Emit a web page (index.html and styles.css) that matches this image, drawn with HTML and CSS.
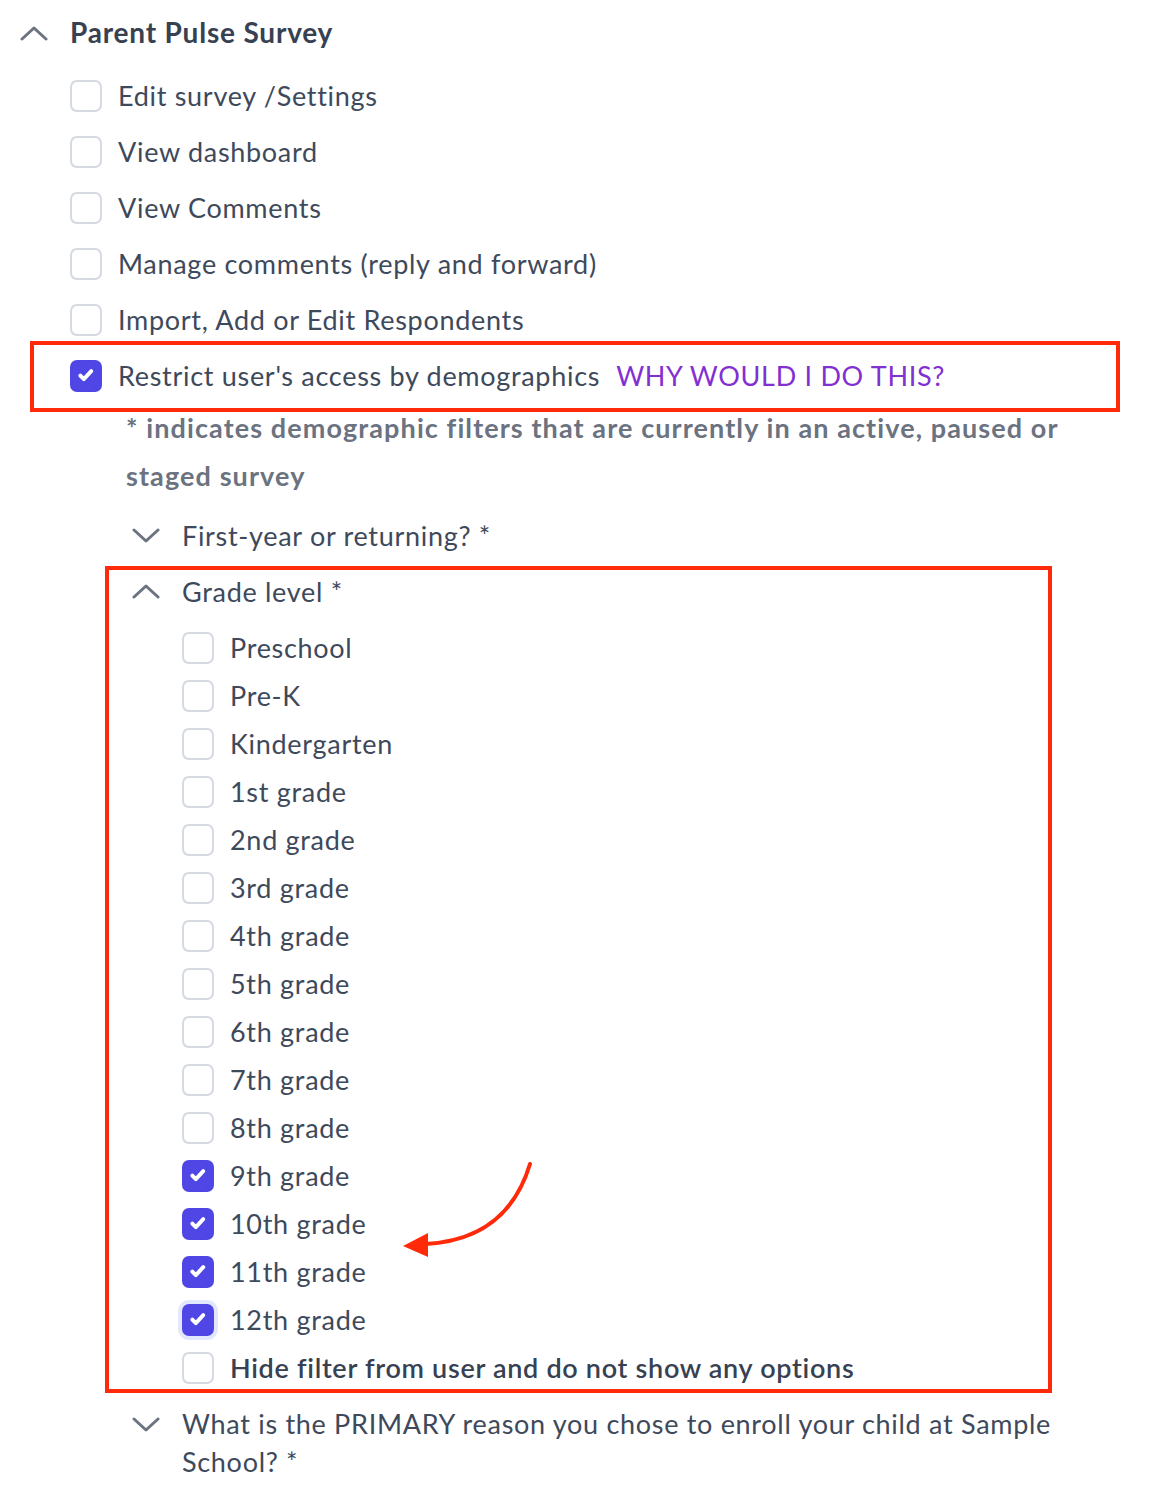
FILE: index.html
```html
<!DOCTYPE html>
<html lang="en">
<head>
    <meta charset="UTF-8">
    <title>Survey permissions</title>
    <link rel="stylesheet" href="styles.css">
</head>
<body>

<div class="permissions">
    <div class="section-head">
        <svg class="chevron" viewBox="0 0 28 16"><path d="M2 14 L14 3 L26 14"/></svg>
        <span class="section-title">Parent Pulse Survey</span>
    </div>

    <ul class="options">
        <li class="option"><span class="checkbox"></span>Edit survey /Settings</li>
        <li class="option"><span class="checkbox"></span>View dashboard</li>
        <li class="option"><span class="checkbox"></span>View Comments</li>
        <li class="option"><span class="checkbox"></span>Manage comments (reply and forward)</li>
        <li class="option"><span class="checkbox"></span>Import, Add or Edit Respondents</li>
        <li class="option highlighted">
            <span class="checkbox checked"><svg viewBox="0 0 32 32"><path d="M9.5 15.5 L13.5 19.5 L22 10.5"/></svg></span>
            Restrict user's access by demographics
            <a class="why" href="#">WHY WOULD I DO THIS?</a>
        </li>
    </ul>

    <div class="filters">
        <p class="filters-note">* indicates demographic filters that are currently in an active, paused or staged survey</p>

        <div class="filter-group">
            <div class="filter-head">
                <svg class="chevron" viewBox="0 0 28 16"><path d="M2 3 L14 14 L26 3"/></svg>
                <span>First-year or returning? *</span>
            </div>
        </div>

        <div class="filter-group open highlighted">
            <div class="filter-head">
                <svg class="chevron" viewBox="0 0 28 16"><path d="M2 14 L14 3 L26 14"/></svg>
                <span>Grade level *</span>
            </div>
            <ul class="filter-options">
                <li class="option"><span class="checkbox"></span>Preschool</li>
                <li class="option"><span class="checkbox"></span>Pre-K</li>
                <li class="option"><span class="checkbox"></span>Kindergarten</li>
                <li class="option"><span class="checkbox"></span>1st grade</li>
                <li class="option"><span class="checkbox"></span>2nd grade</li>
                <li class="option"><span class="checkbox"></span>3rd grade</li>
                <li class="option"><span class="checkbox"></span>4th grade</li>
                <li class="option"><span class="checkbox"></span>5th grade</li>
                <li class="option"><span class="checkbox"></span>6th grade</li>
                <li class="option"><span class="checkbox"></span>7th grade</li>
                <li class="option"><span class="checkbox"></span>8th grade</li>
                <li class="option"><span class="checkbox checked"><svg viewBox="0 0 32 32"><path d="M9.5 15.5 L13.5 19.5 L22 10.5"/></svg></span>9th grade</li>
                <li class="option"><span class="checkbox checked"><svg viewBox="0 0 32 32"><path d="M9.5 15.5 L13.5 19.5 L22 10.5"/></svg></span>10th grade</li>
                <li class="option"><span class="checkbox checked"><svg viewBox="0 0 32 32"><path d="M9.5 15.5 L13.5 19.5 L22 10.5"/></svg></span>11th grade</li>
                <li class="option"><span class="checkbox checked focused"><svg viewBox="0 0 32 32"><path d="M9.5 15.5 L13.5 19.5 L22 10.5"/></svg></span>12th grade</li>
                <li class="option hide-filter"><span class="checkbox"></span>Hide filter from user and do not show any options</li>
            </ul>
            <svg class="arrow" viewBox="0 0 140 100">
                <path class="arrow-line" d="M130 5 Q107 81 25 85"/>
                <path class="arrow-head" d="M3 87 L28 74 L28 98 Z"/>
            </svg>
        </div>

        <div class="filter-group">
            <div class="filter-head multi">
                <span class="chevron-box"><svg class="chevron" viewBox="0 0 28 16"><path d="M2 3 L14 14 L26 3"/></svg></span>
                <span class="head-text">What is the PRIMARY reason you chose to enroll your child at Sample School? *</span>
            </div>
        </div>
    </div>
</div>

</body>
</html>
```

FILE: styles.css
```css
body {
    margin: 0;
    font-family: 'Lato', 'Open Sans', sans-serif;
    color: #3e495b;
    background-color: white;
    letter-spacing: 0.7px;
}

.permissions {
    padding-top: 5px;
}

.chevron {
    width: 28px;
    height: 16px;
    flex-shrink: 0;
}

.chevron path {
    fill: none;
    stroke: #6b7280;
    stroke-width: 3;
    stroke-linecap: round;
    stroke-linejoin: round;
}

.section-head {
    display: flex;
    align-items: center;
    height: 56px;
    padding-left: 20px;
    gap: 22px;
}

.section-title {
    font-size: 28px;
    font-weight: bold;
    letter-spacing: 0.8px;
    color: #374151;
    padding-bottom: 2px;
}

.options,
.filter-options {
    list-style: none;
    margin: 7px 0 0;
    padding: 0;
}

.option {
    display: flex;
    align-items: center;
    box-sizing: border-box;
    height: 56px;
    padding-left: 70px;
    padding-bottom: 2px;
    gap: 16px;
    font-size: 27px;
    white-space: nowrap;
}

.checkbox {
    width: 32px;
    height: 32px;
    box-sizing: border-box;
    border: 2px solid #d5d9e0;
    border-radius: 7px;
    background-color: white;
    flex-shrink: 0;
    display: flex;
    margin-top: 2px;
}

.checkbox.checked {
    background-color: #4f46e5;
    border-color: #4f46e5;
}

.checkbox.focused {
    box-shadow: 0 0 0 4px #e3e7fc;
}

.checkbox svg {
    width: 100%;
    height: 100%;
}

.checkbox path {
    fill: none;
    stroke: white;
    stroke-width: 4.5;
    stroke-linecap: round;
    stroke-linejoin: round;
}

.why {
    color: #8230d2;
    text-decoration: none;
}

/* red annotation boxes */
.highlighted {
    position: relative;
}

.highlighted::after {
    content: "";
    position: absolute;
    border: 4px solid #ff2a0a;
    pointer-events: none;
}

.option.highlighted::after {
    top: -7px;
    bottom: -8px;
    left: 30px;
    right: 36px;
}

.filter-group.highlighted::after {
    top: 3px;
    bottom: -1px;
    left: 105px;
    right: 104px;
}

.filters-note {
    margin: 0;
    padding-left: 126px;
    width: 980px;
    line-height: 48px;
    font-size: 27px;
    font-weight: bold;
    letter-spacing: 1.1px;
    color: #6b7280;
}

.filters .filter-group:first-of-type {
    margin-top: 7px;
}

.filter-head {
    display: flex;
    align-items: center;
    height: 56px;
    padding-left: 132px;
    gap: 22px;
    font-size: 27px;
}

.filter-head.multi {
    height: auto;
    align-items: flex-start;
    padding-top: 13px;
}

.chevron-box {
    display: flex;
    align-items: center;
    height: 38px;
}

.head-text {
    line-height: 38px;
    width: 890px;
}

.filter-options {
    margin-top: 5px;
}

.filter-options .option {
    height: 48px;
    padding-left: 182px;
}

.hide-filter {
    font-weight: 600;
    color: #374151;
}

.arrow {
    position: absolute;
    left: 400px;
    top: 596px;
    width: 140px;
    height: 100px;
}

.arrow-line {
    fill: none;
    stroke: #ff2a0a;
    stroke-width: 4;
    stroke-linecap: round;
}

.arrow-head {
    fill: #ff2a0a;
}
```
